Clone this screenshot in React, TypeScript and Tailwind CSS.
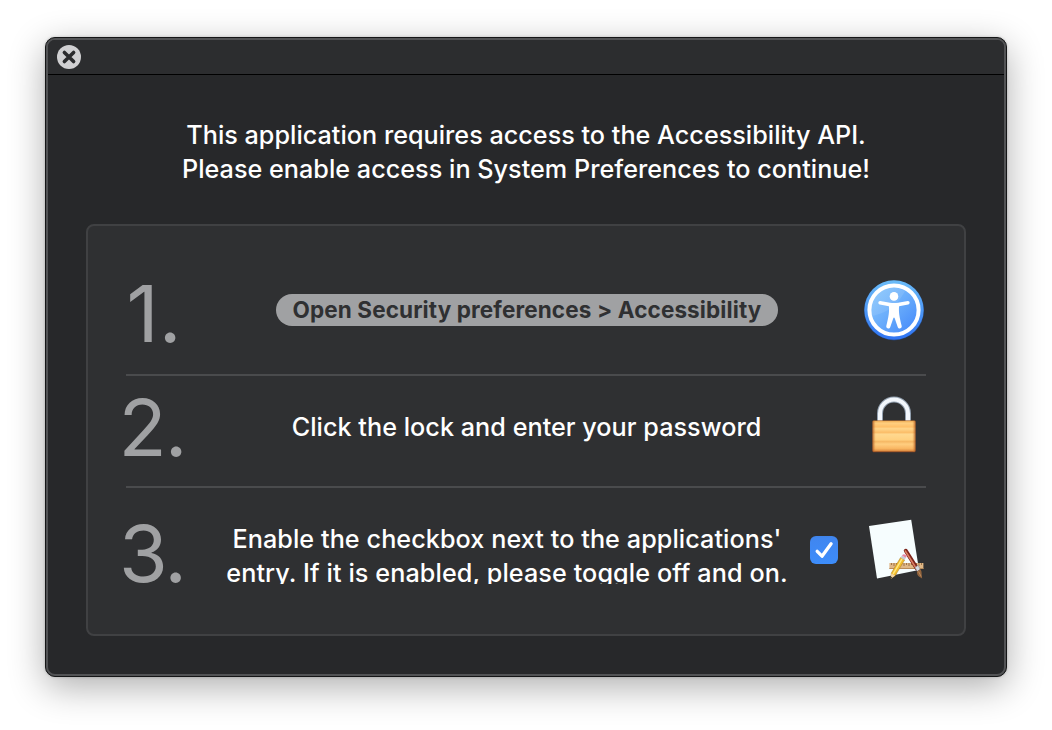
import React from "react";

function CloseIcon() {
  return (
    <svg className="block size-6" viewBox="0 0 24 24">
      <circle cx="12" cy="12" r="12" fill="#d0d0d2" />
      <path d="M7.4 7.4 16.6 16.6M16.6 7.4 7.4 16.6" stroke="#2a2b2d" strokeWidth="3.6" strokeLinecap="round" />
    </svg>
  );
}

function AccessibilityIcon() {
  return (
    <svg className="block h-[62px] w-[62px]" viewBox="0 0 62 62">
      <defs>
        <linearGradient id="ring" x1="0" y1="0" x2="0" y2="1">
          <stop offset="0" stopColor="#6bbcf8" />
          <stop offset="1" stopColor="#2f73f2" />
        </linearGradient>
        <linearGradient id="disc" x1="0" y1="0" x2="1" y2="1">
          <stop offset="0" stopColor="#8ccbfc" />
          <stop offset="0.5" stopColor="#69acfb" />
          <stop offset="1" stopColor="#3f84fa" />
        </linearGradient>
      </defs>
      <circle cx="31" cy="31.4" r="30" fill="#1c4fa8" opacity="0.5" />
      <circle cx="31" cy="31" r="29.7" fill="url(#ring)" />
      <circle cx="31" cy="31" r="24.6" fill="url(#disc)" stroke="#fff" strokeWidth="4" />
      <path d="M9 37C22 34 33 29 42 12A22 22 0 0 0 9 37Z" fill="#fff" opacity="0.1" />
      <circle cx="31" cy="17.4" r="4.3" fill="#fff" />
      <path
        d="M17.2 22.1 27 23.7Q31 24.2 35 23.7L44.8 22.1C47 21.9 47.3 25.1 45.2 25.5L36.1 27.3C35.5 32.5 36.4 38 38.7 47C39.3 49.5 35.6 50.6 34.8 48.2L31.7 39.3Q31 37.6 30.3 39.3L27.2 48.2C26.4 50.6 22.7 49.5 23.3 47C25.6 38 26.5 32.5 25.9 27.3L16.8 25.5C14.7 25.1 15 21.9 17.2 22.1Z"
        fill="#fff"
      />
    </svg>
  );
}

function LockIcon() {
  return (
    <svg className="block h-[58px] w-[50px]" viewBox="0 0 50 58">
      <defs>
        <linearGradient id="brass" x1="0" y1="0" x2="0" y2="1">
          <stop offset="0" stopColor="#eda84f" />
          <stop offset="0.08" stopColor="#ffcf80" />
          <stop offset="0.2" stopColor="#ffbf68" />
          <stop offset="0.26" stopColor="#ffd68b" />
          <stop offset="0.38" stopColor="#fbbd68" />
          <stop offset="0.44" stopColor="#ffd88f" />
          <stop offset="0.62" stopColor="#ffd080" />
          <stop offset="0.68" stopColor="#f6b864" />
          <stop offset="0.76" stopColor="#ffce80" />
          <stop offset="0.9" stopColor="#f9b763" />
          <stop offset="1" stopColor="#d9853c" />
        </linearGradient>
        <linearGradient id="brassEdge" x1="0" y1="0" x2="1" y2="0">
          <stop offset="0" stopColor="#a5501c" stopOpacity="0.75" />
          <stop offset="0.07" stopColor="#dc8d40" stopOpacity="0" />
          <stop offset="0.93" stopColor="#dc8d40" stopOpacity="0" />
          <stop offset="1" stopColor="#a5501c" stopOpacity="0.75" />
        </linearGradient>
        <filter id="lockSoft" x="-10%" y="-10%" width="120%" height="120%">
          <feGaussianBlur stdDeviation="0.6" />
        </filter>
      </defs>
      <g filter="url(#lockSoft)">
        <path d="M11 27V17.5a14 14 0 0 1 28 0V27" fill="none" stroke="#93a0af" strokeWidth="6" />
        <path d="M11 27V17.5a14 14 0 0 1 28 0V27" fill="none" stroke="#f3f7fc" strokeWidth="4" />
        <rect x="3.3" y="24.5" width="43.4" height="31.8" rx="1.2" fill="#7f421f" />
        <rect x="3.8" y="24.7" width="42.4" height="30.8" rx="1" fill="url(#brass)" />
        <rect x="3.8" y="24.7" width="42.4" height="30.8" rx="1" fill="url(#brassEdge)" />
      </g>
    </svg>
  );
}

function CheckboxIcon() {
  return (
    <svg className="block size-7" viewBox="0 0 28 28">
      <defs>
        <linearGradient id="check" x1="0" y1="0" x2="0" y2="1">
          <stop offset="0" stopColor="#3f83e8" />
          <stop offset="0.08" stopColor="#4086f0" />
          <stop offset="1" stopColor="#3d8dfb" />
        </linearGradient>
      </defs>
      <rect width="28" height="28" rx="6" fill="url(#check)" />
      <path d="M7.2 15.3 12 20.2 21.1 7.8" fill="none" stroke="#fff" strokeWidth="3.3" strokeLinecap="round" strokeLinejoin="round" />
    </svg>
  );
}

function ApplicationIcon() {
  return (
    <svg className="block h-[62px] w-[58px]" viewBox="0 0 58 62">
      <path d="M2 8 44.2 1.7 52 52 10 60.5Z" fill="#f6fdfe" />
      <rect x="22.4" y="45" width="34" height="6" fill="#dfb786" />
      <path d="M22.4 50.5H56.4" stroke="#b98b58" />
      <path
        d="M24.5 45v2M27 45v3M29.5 45v2M32 45v3M34.5 45v2M37 45v3M39.5 45v2M42 45v3M44.5 45v2M47 45v3M49.5 45v2M52 45v3M54.5 45v2"
        stroke="#83572e"
        strokeWidth="0.7"
      />
      <path d="M38.8 32.8 50 50.6" stroke="#7e251b" strokeWidth="4" strokeLinecap="round" />
      <path d="M38.3 33 49 50" stroke="#dc7d61" strokeWidth="1.5" strokeLinecap="round" />
      <path d="M48 49.4 51.1 47.3 53.2 51.3 50.2 53.4Z" fill="#d6d9df" stroke="#7d8088" strokeWidth="0.5" />
      <path d="M50 53.5 53.2 51.2C55.5 53.2 54.1 56.5 55.3 60.6C52.5 58.7 49.6 58.2 50 53.5Z" fill="#92633c" />
      <path d="M51.5 53.5 54.2 58.5" stroke="#c59466" strokeWidth="0.8" />
      <path d="M33.6 39.5 37.6 42 28.3 57.5 24 60.5 24.3 55.1Z" fill="#f2bd2e" stroke="#a67821" strokeWidth="0.5" />
      <path d="M35 40.9 26.2 55.9" stroke="#ffe982" strokeWidth="1.4" />
      <path d="M24.3 55.4 28.2 57.5 24 60.7Z" fill="#f1d5a9" />
      <path d="M24.1 58.8 25.4 59.5 24 60.7Z" fill="#333" />
      <path d="M33.6 39.5 35 37.4 38.8 39.8 37.6 42Z" fill="#c7cbd3" />
      <path d="M35 37.4Q36.4 35.5 38.4 36.7T38.8 39.8Z" fill="#e987a3" />
    </svg>
  );
}

function StepNumber({ children }: { children: React.ReactNode }) {
  return (
    <div className="flex w-[132px] shrink-0 justify-center text-[79px] font-[430] leading-[80px] text-[#a0a1a3]">{children}</div>
  );
}

export default function App() {
  return (
    <main
      className="flex h-[730px] w-[1052px] flex-col overflow-hidden bg-white px-[45px] pt-[37px] text-white"
      style={{ fontFamily: 'Inter, "Liberation Sans", sans-serif' }}
    >
      <section className="flex h-[640px] w-[962px] flex-col rounded-[10px] border border-[#151617] bg-[#27282a] shadow-[0_10px_36px_rgba(0,0,0,0.32),0_0_3px_rgba(0,0,0,0.2)]">
        <div className="flex min-h-0 flex-1 flex-col overflow-hidden rounded-[9px] border-2 border-[#525355]">
          <header className="flex h-[35px] shrink-0 items-center border-b border-black bg-[#2c2d2f] pl-[9px]">
            <button aria-label="Close">
              <CloseIcon />
            </button>
          </header>
          <div className="flex flex-col items-center pt-[43px] text-[25.2px] font-medium leading-[34px]">
            <p className="whitespace-nowrap tracking-[0.01px]">This application requires access to the Accessibility API.</p>
            <p className="whitespace-nowrap tracking-[0.02px]">Please enable access in System Preferences to continue!</p>
          </div>
          <div className="mx-[38px] mt-[38px] flex h-[412px] flex-col rounded-lg border-2 border-[#404143] bg-[#2f3032]">
            <div className="flex h-[148px] items-center pt-[20px]">
              <div className="pt-[5px]">
                <StepNumber>1.</StepNumber>
              </div>
              <div className="flex flex-1 justify-center pr-[26px]">
                <button className="h-8 w-[502px] shrink-0 whitespace-nowrap rounded-full bg-[#a0a1a3] text-[22.5px] font-bold leading-8 tracking-[0.12px] text-[#2f3032]">
                  Open Security preferences &gt; Accessibility
                </button>
              </div>
              <div className="flex w-[104px] pl-[3px]">
                <AccessibilityIcon />
              </div>
            </div>
            <div className="mx-[38px] h-0.5 shrink-0 bg-[#4a4b4d]" />
            <div className="flex h-[110px] items-center pb-2">
              <div className="-ml-[2px] mr-[2px] tracking-[-2px]">
                <StepNumber>2.</StepNumber>
              </div>
              <p className="flex-1 whitespace-nowrap pr-[27px] text-center text-[25.2px] font-medium leading-[34px] tracking-[0.03px]">
                Click the lock and enter your password
              </p>
              <div className="-mt-[5px] flex w-[104px] pl-[9px]">
                <LockIcon />
              </div>
            </div>
            <div className="mx-[38px] h-0.5 shrink-0 bg-[#4a4b4d]" />
            <div className="flex h-[130px] items-center">
              <div className="-ml-[2px] mr-[2px] tracking-[-2px]">
                <StepNumber>3.</StepNumber>
              </div>
              <div className="flex h-[62px] w-[574px] shrink-0 flex-col items-center overflow-hidden text-[25.2px] font-medium leading-[34px]">
                <p className="whitespace-nowrap tracking-[0.07px]">Enable the checkbox next to the applications'</p>
                <p className="whitespace-nowrap tracking-[0.09px]">entry. If it is enabled, please toggle off and on.</p>
              </div>
              <div className="mb-1.5 ml-4">
                <CheckboxIcon />
              </div>
              <div className="mb-[9px] ml-[29px]">
                <ApplicationIcon />
              </div>
            </div>
          </div>
        </div>
      </section>
    </main>
  );
}
